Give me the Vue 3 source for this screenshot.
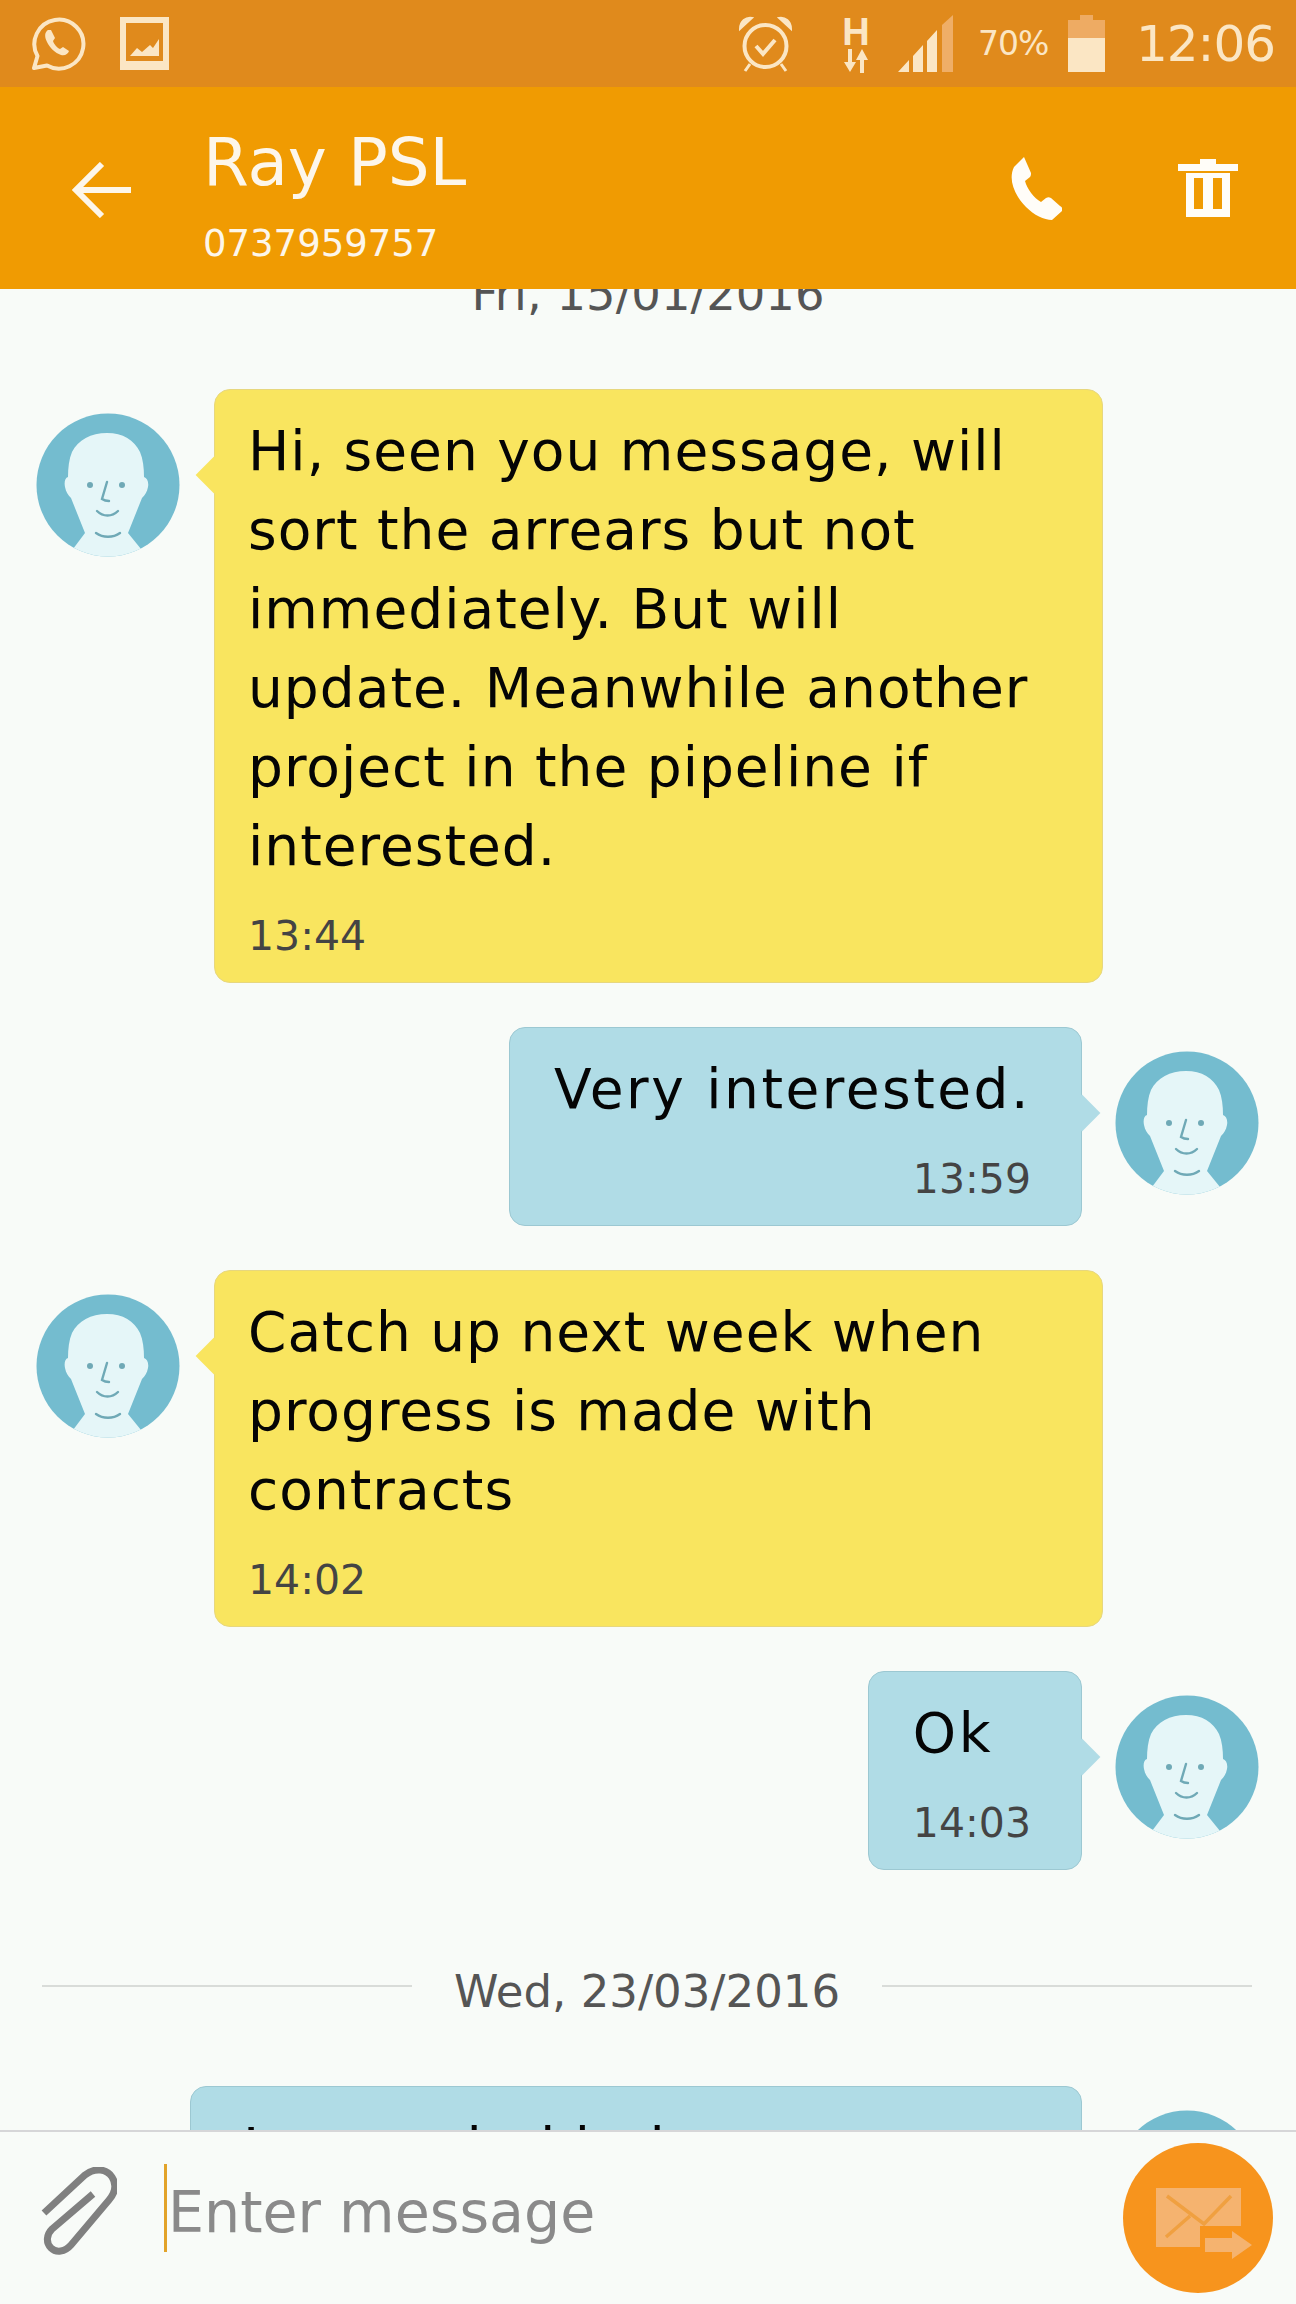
<template>
  <div class="phone">
    <div class="statusbar">
      <svg class="st-whatsapp" width="58" height="58" viewBox="0 0 58 58" fill="none">
        <path d="M6 53l3.5-12A24.5 24.5 0 1 1 19 50.5z" stroke="#fbe6c4" stroke-width="4" stroke-linejoin="round" />
        <path d="M20 15c-3 2-4 6-1 12 3 6 8 11 14 13 4 1 7-1 8-4l-6-4-3 2c-3-1-6-5-7-8l2-3-4-8z" fill="#fbe6c4" />
      </svg>
      <svg class="st-image" width="49" height="53" viewBox="0 0 49 53">
        <path d="M0 0h49v53H0z M6 6v38h37V6z" fill="#fbe6c4" fill-rule="evenodd" />
        <path d="M10 39l7-8 5 4 8-7 3 3 6-9v17z" fill="#fbe6c4" />
      </svg>
      <div class="st-spacer"></div>
      <svg class="st-alarm" width="55" height="57" viewBox="0 0 55 57" fill="none" stroke="#fbe6c4">
        <circle cx="27.5" cy="31" r="21" stroke-width="4" />
        <path d="M18 31l7 8 12-14" stroke-width="4" />
        <path d="M2 14c0-8 6-12 12-11z M53 14c0-8-6-12-12-11z" fill="#fbe6c4" stroke-width="2" />
        <path d="M12 49l-5 7M43 49l5 7" stroke-width="3" />
      </svg>
      <div class="st-net">
        <span class="st-h">H</span>
        <svg width="24" height="24" viewBox="0 0 24 24" fill="#fbe6c4">
          <path d="M4 0h4v13h4l-6 10-6-10h4z" />
          <path d="M16 24h4V11h4L18 0l-6 11h4z" />
        </svg>
      </div>
      <svg class="st-signal" width="57" height="57" viewBox="0 0 57 57">
        <path d="M0 57l11-12v12z M15 57V41l10-11v27z M29 57V26l10-11v42z" fill="#fbe6c4" />
        <path d="M44 57V10l11-10v57z" fill="#efae67" />
      </svg>
      <span class="st-pct">70%</span>
      <svg class="st-battery" width="37" height="57" viewBox="0 0 37 57">
        <path d="M12 0h13v5h12v18H0V5h12z" fill="#eeab63" />
        <path d="M0 23h37v34H0z" fill="#fbe6c4" />
      </svg>
      <span class="st-time">12:06</span>
    </div>

    <header class="topbar">
      <svg class="back" width="59" height="56" viewBox="0 0 59 56" fill="none" stroke="#fdf6ea" stroke-width="6">
        <path d="M59 28H4M30 2L4 28l26 26" />
      </svg>
      <div class="contact">
        <div class="name">Ray PSL</div>
        <div class="number">0737959757</div>
      </div>
      <svg class="call" width="52" height="63" viewBox="0 0 52 63" fill="#fffdf8">
        <path d="M14 0L4 10c-6 12 0 28 12 40 8 8 18 13 26 13l10-9c1-2 0-4-2-5l-9-8c-2-1-3-1-5 0l-5 4C24 41 17 32 15 24l5-4c1-1 1-3 1-4z" />
      </svg>
      <svg class="trash" width="60" height="58" viewBox="0 0 60 58" fill="#fffdf8">
        <path d="M22 0h16v5h22v7H0V5h22z" />
        <path d="M8 14h44v44H8z M16 19v31h9V19z M35 19v31h9V19z" fill-rule="evenodd" />
      </svg>
    </header>

    <main class="thread">
      <div class="date date-top">Fri, 15/01/2016</div>

      <div v-for="m in firstMessages" :key="m.time" class="row" :class="m.sent ? 'row-sent' : 'row-received'">
        <div class="bubble" :class="m.sent ? 'bubble-sent' : 'bubble-received'">
          <div v-for="line in m.lines" :key="line" class="line">{{ line }}</div>
          <div class="time">{{ m.time }}</div>
        </div>
        <svg class="avatar" width="144" height="144" viewBox="0 0 144 144">
          <defs>
            <clipPath :id="'clip-' + m.time.replace(':', '')"><circle cx="72" cy="72" r="71.5" /></clipPath>
          </defs>
          <g :clip-path="'url(#clip-' + m.time.replace(':', '') + ')'">
            <rect width="144" height="144" fill="#74bccf" />
            <path d="M71 20c-16 0-29 7-35 19-3 7-4 16-4 25-3 1-4 5-3 10 1 5 3 8 6 11l14 35-12 16v9h68v-9l-13-16 14-35c3-3 5-6 6-11 1-5-1-9-4-10 0-9-1-18-4-25-6-12-17-19-33-19z" fill="#e5f6f8" />
          </g>
          <g fill="none" stroke="#6fa9b6" stroke-width="2.4" stroke-linecap="round">
            <path d="M71 69l-5 17c3 2 5 2 7 2" />
            <path d="M61 98c6 6 15 6 21 0" />
            <path d="M60 120c7 5 17 5 24 0" />
          </g>
          <circle cx="54" cy="72" r="3" fill="#6fa9b6" />
          <circle cx="86" cy="72" r="3" fill="#6fa9b6" />
        </svg>
      </div>

      <div class="date date-mid">
        <span class="rule"></span>
        <span>Wed, 23/03/2016</span>
        <span class="rule"></span>
      </div>

      <div class="row row-sent">
        <div class="bubble bubble-sent bubble-wide">
          <div class="line">I even do kind</div>
        </div>
        <svg class="avatar" width="144" height="144" viewBox="0 0 144 144">
          <circle cx="72" cy="72" r="71.5" fill="#74bccf" />
        </svg>
      </div>
    </main>

    <footer class="composer">
      <svg class="clip" width="76" height="88" viewBox="0 0 76 88" fill="none" stroke="#808080" stroke-width="7">
        <path d="M3 46L44 8C54 0 66 2 71 10C76 18 74 26 68 33L30 78C24 85 15 86 10 81C5 76 5 68 11 62L52 27" />
      </svg>
      <div class="input">Enter message</div>
      <button class="send">
        <svg width="96" height="71" viewBox="0 0 96 71">
          <path d="M0 0h85v59H0z" fill="#f5b36f" />
          <path d="M11 8l37 28 27-28M10 49l24-21" fill="none" stroke="#f0a040" stroke-width="3.5" />
          <path d="M44 38h52v33H44z" fill="#f7941d" />
          <path d="M49 50h27v-7l20 14-20 14v-7H49z" fill="#f5b36f" />
        </svg>
      </button>
    </footer>
  </div>
</template>

<script setup>
const firstMessages = [
  {
    time: '13:44',
    lines: ['Hi, seen you message, will', 'sort the arrears but not', 'immediately. But will', 'update. Meanwhile another', 'project in the pipeline if', 'interested.'],
  },
  { time: '13:59', sent: true, lines: ['Very interested.'] },
  {
    time: '14:02',
    lines: ['Catch up next week when', 'progress is made with', 'contracts'],
  },
  { time: '14:03', sent: true, lines: ['Ok'] },
]
</script>

<style>
html, body { margin: 0; background: #f8fbf8; }
</style>

<style scoped>
.phone { width: 1296px; height: 2304px; display: flex; flex-direction: column; overflow: hidden; background: #f8fbf8; font-family: "DejaVu Sans", sans-serif; color: #111; }

.statusbar { height: 87px; flex: none; box-sizing: border-box; background: #e08a1c; display: flex; align-items: center; padding: 0 24px 0 28px; color: #fbe6c4; }
.st-whatsapp { margin-right: 34px; }
.st-spacer { flex: 1; }
.st-alarm { margin-right: 51px; }
.st-net { display: flex; flex-direction: column; align-items: center; width: 24px; margin-right: 30px; }
.st-h { font-size: 38px; line-height: 34px; font-weight: 700; font-family: "Liberation Sans", sans-serif; }
.st-signal { margin-right: 23px; }
.st-pct { font-size: 33px; width: 77px; letter-spacing: -1px; margin-right: 13px; white-space: nowrap; }
.st-battery { margin-right: 31px; }
.st-time { font-size: 50px; width: 136px; letter-spacing: -1px; white-space: nowrap; }

.topbar { height: 202px; flex: none; box-sizing: border-box; background: #f09b02; display: flex; align-items: center; padding: 0 58px 0 72px; color: #fdf6ea; }
.back { margin-right: 72px; margin-top: 4px; }
.contact { flex: 1; margin-top: 14px; }
.name { font-size: 66px; line-height: 84px; white-space: nowrap; }
.number { font-size: 37px; line-height: 50px; margin-top: 14px; white-space: nowrap; }
.call { margin-right: 116px; }

.thread { flex: 1; min-height: 0; overflow: hidden; }
.date { font-size: 45px; line-height: 60px; color: #555; white-space: nowrap; }
.date-top { font-size: 46.5px; margin-top: -25px; margin-bottom: 65px; text-align: center; }
.date-mid { display: flex; align-items: center; gap: 42px; padding: 0 44px 0 42px; margin: 92px 0 64px; }
.rule { flex: 1; height: 2px; background: #d9dcd9; margin-top: -12px; }

.row { display: flex; align-items: flex-start; margin-bottom: 44px; }
.row-received { flex-direction: row-reverse; justify-content: flex-end; padding-left: 36px; gap: 34px; }
.row-sent { justify-content: flex-end; padding-right: 37px; gap: 33px; }
.avatar { flex: none; margin-top: 24px; }

.bubble { position: relative; box-sizing: border-box; border-radius: 16px; padding: 22px 50px 16px 44px; }
.bubble-received { width: 889px; background: #f9e55f; border: 1px solid #e7d77e; padding-left: 33px; }
.bubble-sent { background: #b0dce6; border: 1px solid #9cc8d2; }
.bubble-wide { width: 892px; padding-left: 52px; }
.bubble::after { content: ""; position: absolute; top: 72px; width: 26px; height: 26px; transform: rotate(45deg); }
.bubble-received::after { left: -14px; background: #f9e55f; }
.bubble-sent::after { right: -14px; background: #b0dce6; }
.line { font-size: 55px; line-height: 79px; letter-spacing: 1px; color: #050505; white-space: nowrap; }
.bubble-sent .line { letter-spacing: 2.5px; }
.time { font-size: 41px; line-height: 60px; margin-top: 20px; color: #444; }
.bubble-sent .time { text-align: right; }

.composer { height: 174px; flex: none; box-sizing: border-box; background: #f8fbf8; border-top: 2px solid #d6d6d8; display: flex; align-items: center; padding: 0 23px 0 41px; }
.clip { margin-right: 47px; margin-bottom: 14px; }
.input { flex: 1; height: 88px; margin-bottom: 20px; padding-left: 1px; border-left: 3px solid #e2a32a; font-size: 57px; line-height: 96px; color: #8a8a8a; white-space: nowrap; }
.send { width: 150px; height: 150px; border: 0; border-radius: 50%; background: #f7941d; display: flex; align-items: center; justify-content: center; padding: 10px 0 0 12px; }
</style>
